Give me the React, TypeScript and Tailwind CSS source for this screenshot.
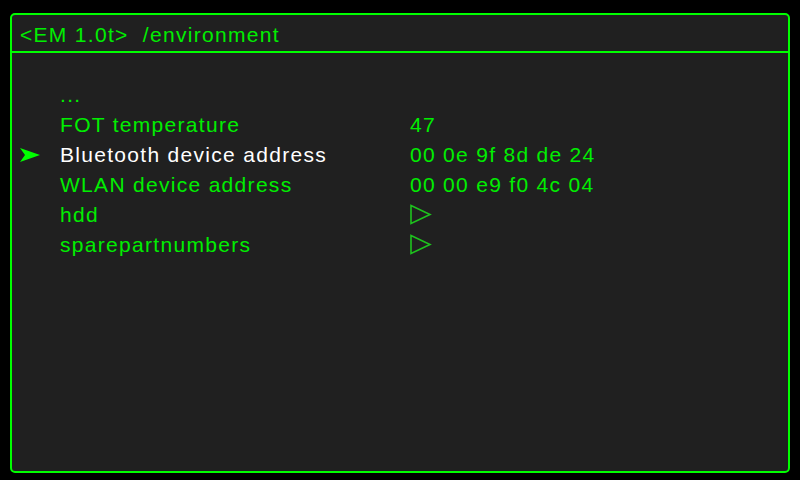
const rows: { label: string; value?: string; sub?: boolean; selected?: boolean }[] = [
  { label: "..." },
  { label: "FOT temperature", value: "47" },
  { label: "Bluetooth device address", value: "00 0e 9f 8d de 24", selected: true },
  { label: "WLAN device address", value: "00 00 e9 f0 4c 04" },
  { label: "hdd", sub: true },
  { label: "sparepartnumbers", sub: true },
];

function Pointer() {
  return (
    <svg width="20" height="14" viewBox="0 0 20 14">
      <path d="M0 0 L20 7 L0 14 L5 7 Z" fill="#00ff00" />
    </svg>
  );
}

function SubArrow() {
  return (
    <svg width="22" height="22" viewBox="0 0 22 22">
      <path d="M1 1.5 L20 10.5 L1 19.5 Z" fill="none" stroke="#1ec21e" strokeWidth="1.6" />
    </svg>
  );
}

export default function App() {
  return (
    <div className="w-[800px] h-[480px] bg-black pt-[13px] pl-[10px] font-['Liberation_Sans',Arial,sans-serif] text-[21px] tracking-[1.3px]">
      <div className="w-[780px] h-[460px] bg-[#202020] border-2 border-[#00ff00] rounded-[5px] flex flex-col">
        <div className="h-[38px] flex items-center pl-[8px] pt-[3px] text-[#00ee00] border-b-2 border-[#00ff00]">
          &lt;EM 1.0t&gt;&nbsp; /environment
        </div>
        <div className="pt-[27px] flex flex-col">
          {rows.map((r) => (
            <div key={r.label} className="h-[30px] flex items-center">
              <div className="w-[48px] pl-[8px] flex items-center">{r.selected && <Pointer />}</div>
              <div className={`w-[350px] ${r.selected ? "text-white" : "text-[#00ee00]"}`}>{r.label}</div>
              <div className="text-[#00ee00] flex items-center">
                {r.value}
                {r.sub && <SubArrow />}
              </div>
            </div>
          ))}
        </div>
      </div>
    </div>
  );
}
